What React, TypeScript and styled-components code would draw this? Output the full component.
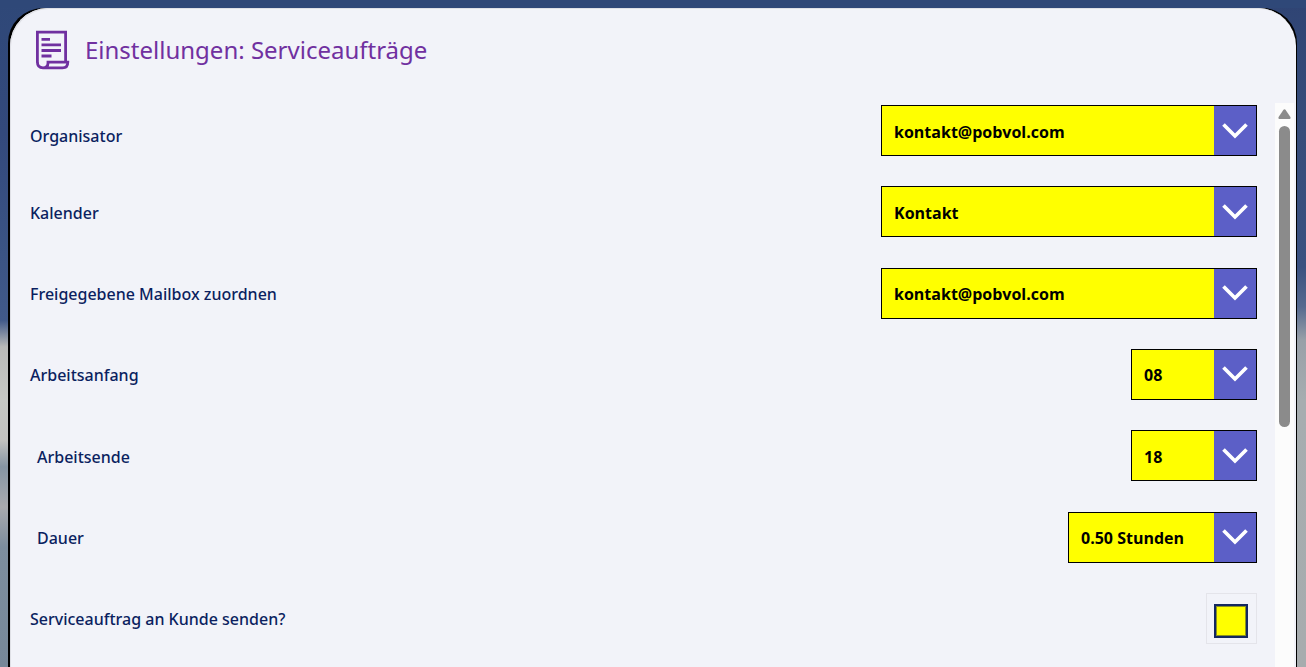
import React, { useId } from "react";
import styled, { createGlobalStyle } from "styled-components";

const GlobalStyle = createGlobalStyle`
  *, *::before, *::after { box-sizing: border-box; }
  body { margin: 0; font-family: "Noto Sans", "Open Sans", sans-serif; }
`;

const Page = styled.div`
  height: 100vh;
  overflow: hidden;
  padding: 8px 9px 0 8px;
  display: flex;
  background:
    linear-gradient(#2f4878 0, #2f4878 100%) top / 100% 8px no-repeat,
    linear-gradient(#2f4878 0, #33497c 20%, #3b5484 38%, #41598a 48%, #b9bab9 52%, #c6c8c4 60%, #c2c2bf 66%, #8695a3 70%, #a9aaae 76%, #7d8e9e 82%, #778899 100%) left / 50% 100% no-repeat,
    linear-gradient(#2f4474 0, #374d7a 20%, #3a5180 40%, #566a8f 46%, #98a0a8 51%, #a6adb0 60%, #a7acae 100%) right / 50% 100% no-repeat;
`;

const Frame = styled.div`
  flex: 1;
  min-width: 0;
  display: flex;
  padding: 0 1px 0 2px;
  border-radius: 35px 35px 0 0;
  background: #000;
`;

const Panel = styled.main`
  flex: 1;
  min-width: 0;
  display: flex;
  flex-direction: column;
  background: #f2f3f9;
  border-radius: 38px 38px 0 0;
  box-shadow: inset 1px 1px 0 #dfe0e6;
`;

const Header = styled.header`
  display: flex;
  align-items: center;
  gap: 15px;
  height: 95px;
  padding: 0 26px 12px;
`;

const Title = styled.h1`
  margin: 0;
  font-size: 24px;
  line-height: 32px;
  font-weight: 400;
  color: #7030a0;
`;

const Body = styled.div`
  flex: 1;
  min-height: 0;
  display: flex;
  padding-right: 2px;
`;

const Form = styled.form`
  flex: 1;
  min-width: 0;
  display: flex;
  flex-direction: column;
  justify-content: space-between;
  gap: 30px;
  padding: 2px 18px 23px 20px;
`;

const Label = styled.label`
  padding-top: 2px;
  font-size: 16px;
  line-height: 22px;
  font-weight: 500;
  color: #0b1f60;
`;

const Row = styled.div<{ $indent?: boolean }>`
  flex: none;
  display: flex;
  align-items: center;
  justify-content: space-between;
  padding-left: ${(p) => (p.$indent ? 7 : 0)}px;

  &:first-child ${Label} {
    padding-top: 10px;
  }
`;

const SelectBox = styled.div<{ $width: number }>`
  display: grid;
  grid-template-columns: 1fr 42px;
  width: ${(p) => p.$width}px;
  height: 51px;
  border: 1px solid #000;
  background: #ffff00;
`;

const Select = styled.select`
  grid-area: 1 / 1 / 2 / 3;
  width: 100%;
  height: 100%;
  appearance: none;
  margin: 0;
  padding: 2px 54px 0 12px;
  border: 0;
  border-radius: 0;
  outline: 0;
  background: transparent;
  font: 700 16px "Open Sans", "Noto Sans", sans-serif;
  color: #000;
`;

const Arrow = styled.span`
  grid-area: 1 / 2 / 2 / 3;
  display: flex;
  align-items: center;
  justify-content: center;
  background: #5c5fc7;
  pointer-events: none;
`;

const CheckFrame = styled.div`
  display: flex;
  align-items: center;
  justify-content: center;
  width: 51px;
  height: 51px;
  padding: 5px 1px 0 0;
  border: 1px solid #e4e4ea;
`;

const Checkbox = styled.input`
  appearance: none;
  width: 34px;
  height: 34px;
  margin: 0;
  border: 2px solid #14285f;
  outline: 0;
  background: #ffff00;
  box-shadow: inset 0 0 0 1px #8a9120;
`;

const Scrollbar = styled.div`
  flex: none;
  display: flex;
  flex-direction: column;
  align-items: center;
  width: 19px;
  padding-top: 6px;
  gap: 7px;
  background: #fcfcfc;
`;

const Thumb = styled.div`
  width: 11px;
  height: 54%;
  border-radius: 6px;
  background: #8b8b8b;
`;

const DocumentIcon = () => (
  <svg width="34" height="40" viewBox="0 0 34 40" fill="none" stroke="#7030a0" strokeWidth="2.8" aria-hidden="true">
    <path d="M1.4 32.5V2.2H29.6V32" />
    <path d="M1.4 32C1.4 36 3.8 37.8 7 37.8H26.5C30 37.8 31.8 35.8 31.8 32.2H12V33C12 36 10 37.8 7 37.8" />
    <path d="M5.5 9.3H14M5.5 14.9H25M5.5 20.5H25M5.5 26H15.5" />
  </svg>
);

const Chevron = () => (
  <svg width="26" height="16" viewBox="0 0 26 16" fill="none" stroke="#fff" strokeWidth="3.7" aria-hidden="true">
    <path d="M1.5 1.5L13 13L24.5 1.5" />
  </svg>
);

const ScrollUp = () => (
  <svg width="13" height="10" viewBox="0 0 13 10" fill="#8b8b8b" aria-hidden="true">
    <path d="M5.5 0.7Q6.5-.4 7.5 .7L12.4 8Q13 10 11.6 10H1.4Q0 10 .6 8Z" />
  </svg>
);

type SelectFieldProps = { label: string; value: string; width: number; indent?: boolean };

const SelectField = ({ label, value, width, indent }: SelectFieldProps) => {
  const id = useId();
  return (
    <Row $indent={indent}>
      <Label htmlFor={id}>{label}</Label>
      <SelectBox $width={width}>
        <Arrow><Chevron /></Arrow>
        <Select id={id} defaultValue={value}>
          <option>{value}</option>
        </Select>
      </SelectBox>
    </Row>
  );
};

const fields: SelectFieldProps[] = [
  { label: "Organisator", value: "kontakt@pobvol.com", width: 376 },
  { label: "Kalender", value: "Kontakt", width: 376 },
  { label: "Freigegebene Mailbox zuordnen", value: "kontakt@pobvol.com", width: 376 },
  { label: "Arbeitsanfang", value: "08", width: 126 },
  { label: "Arbeitsende", value: "18", width: 126, indent: true },
  { label: "Dauer", value: "0.50 Stunden", width: 189, indent: true },
];

export default function App() {
  return (
    <>
      <GlobalStyle />
      <Page>
        <Frame>
          <Panel>
            <Header>
              <DocumentIcon />
              <Title>Einstellungen: Serviceaufträge</Title>
            </Header>
            <Body>
              <Form>
                {fields.map((field) => (
                  <SelectField key={field.label} {...field} />
                ))}
                <Row>
                  <Label htmlFor="send-to-customer">Serviceauftrag an Kunde senden?</Label>
                  <CheckFrame>
                    <Checkbox type="checkbox" id="send-to-customer" />
                  </CheckFrame>
                </Row>
              </Form>
              <Scrollbar aria-hidden="true">
                <ScrollUp />
                <Thumb />
              </Scrollbar>
            </Body>
          </Panel>
        </Frame>
      </Page>
    </>
  );
}
